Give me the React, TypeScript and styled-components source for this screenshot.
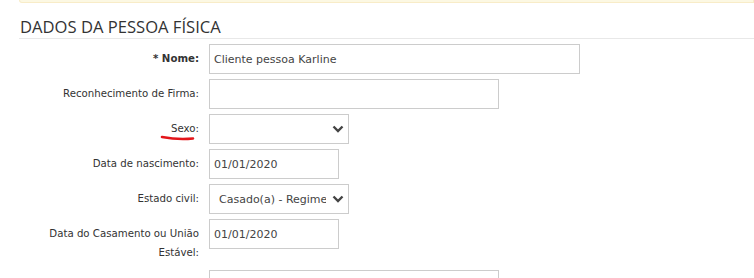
import styled, { createGlobalStyle } from "styled-components";

const GlobalStyle = createGlobalStyle`
  body {
    margin: 0;
    background: #fff;
    font-family: "DejaVu Sans", Verdana, sans-serif;
    color: #333;
  }
`;

const Page = styled.div`
  width: 754px;
  height: 278px;
  overflow: hidden;
`;

const AlertEdge = styled.div`
  margin-left: 19px;
  height: 2px;
  background: #fcf8e3;
  border: 1px solid #f8ecc8;
  border-top: none;
  border-bottom-left-radius: 4px;
`;

const Heading = styled.h3`
  margin: 14px 0 0 20px;
  font-family: "Open Sans", sans-serif;
  font-size: 16.6px;
  font-weight: 400;
  line-height: 20px;
  color: #333;
  text-transform: uppercase;
`;

const Divider = styled.div`
  margin: 1px 0 5px 19px;
  border-bottom: 1px solid #e8e8e8;
`;

const Row = styled.div`
  display: flex;
  align-items: flex-start;
  margin-bottom: 5px;
`;

const Label = styled.label<{ $bold?: boolean }>`
  position: relative;
  margin-left: 20px;
  padding: 5px 10px 3px 0;
  box-sizing: border-box;
  width: 189px;
  text-align: right;
  font-size: 10.2px;
  line-height: 19px;
  font-weight: ${(p) => (p.$bold ? 700 : 400)};
  color: #333;
`;

const Field = styled.div<{ $w: number }>`
  width: ${(p) => p.$w}px;
  height: 30px;
  box-sizing: border-box;
  border: 1px solid #ccc;
  background: #fff;
  display: flex;
  align-items: center;
  padding: 0 4px;
  font-size: 11px;
  color: #444;
  white-space: nowrap;
`;

const SelectBox = styled(Field)`
  padding: 0 4px 0 9px;
  gap: 6px;
`;

const SelectText = styled.span`
  flex: 1;
  overflow: hidden;
  text-overflow: clip;
`;

const Mark = styled.svg`
  position: absolute;
  left: 140px;
  top: 21px;
  overflow: visible;
`;

function Chevron() {
  return (
    <svg width="12" height="8" viewBox="0 0 12 8">
      <path d="M1.5 1.5 L6 6 L10.5 1.5" fill="none" stroke="#444" strokeWidth="2.4" />
    </svg>
  );
}

export default function App() {
  return (
    <Page>
      <GlobalStyle />
      <AlertEdge />
      <Heading>Dados da pessoa física</Heading>
      <Divider />
      <Row>
        <Label $bold>* Nome:</Label>
        <Field $w={371}>Cliente pessoa Karline</Field>
      </Row>
      <Row>
        <Label>Reconhecimento de Firma:</Label>
        <Field $w={290} />
      </Row>
      <Row>
        <Label>
          Sexo:
          <Mark width="36" height="6">
            <path d="M2 2 Q 18 5 33 3.5" fill="none" stroke="#e3161b" strokeWidth="2.6" strokeLinecap="round" />
          </Mark>
        </Label>
        <SelectBox $w={140}>
          <SelectText />
          <Chevron />
        </SelectBox>
      </Row>
      <Row>
        <Label>Data de nascimento:</Label>
        <Field $w={130}>01/01/2020</Field>
      </Row>
      <Row>
        <Label>Estado civil:</Label>
        <SelectBox $w={140}>
          <SelectText>Casado(a) - Regime de comunhão parcial</SelectText>
          <Chevron />
        </SelectBox>
      </Row>
      <Row>
        <Label>Data do Casamento ou União Estável:</Label>
        <Field $w={130}>01/01/2020</Field>
      </Row>
      <Row>
        <Label />
        <Field $w={290} />
      </Row>
    </Page>
  );
}
